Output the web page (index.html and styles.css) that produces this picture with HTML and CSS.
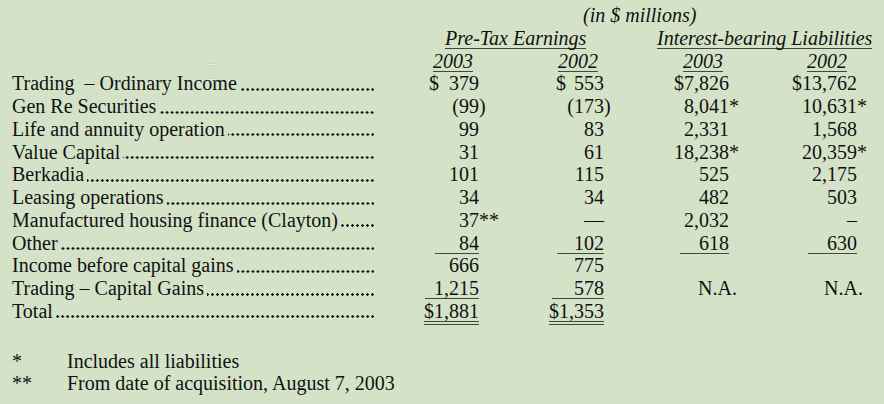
FILE: index.html
```html
<!DOCTYPE html>
<html>
<head>
<meta charset="utf-8">
<link rel="stylesheet" href="styles.css">
</head>
<body>
<div class="sheet">
  <div class="row">
    <div class="cap">(in $ millions)</div>
  </div>
  <div class="row">
    <div class="lab"></div>
    <div class="grp grp1"><span class="u">Pre-Tax Earnings</span></div>
    <div class="grp grp2"><span class="u">Interest-bearing Liabilities</span></div>
  </div>
  <div class="row">
    <div class="lab"></div>
    <div class="num yr"><span class="u">2003</span></div>
    <div class="num yr"><span class="u">2002</span></div>
    <div class="num yr"><span class="u">2003</span></div>
    <div class="num yr yr4"><span class="u">2002</span></div>
  </div>

  <div class="row">
    <div class="lab"><span class="txt">Trading&nbsp; – Ordinary Income</span><span class="dots"></span></div>
    <div class="num"><span class="cur">$</span>379</div>
    <div class="num"><span class="cur c2">$</span>553</div>
    <div class="num">$7,826</div>
    <div class="num">$13,762</div>
  </div>
  <div class="row">
    <div class="lab"><span class="txt">Gen Re Securities</span><span class="dots"></span></div>
    <div class="num">(99<span class="hp">)</span></div>
    <div class="num">(173<span class="hp">)</span></div>
    <div class="num">8,041<span class="hs">*</span></div>
    <div class="num">10,631<span class="hs">*</span></div>
  </div>
  <div class="row">
    <div class="lab"><span class="txt">Life and annuity operation</span><span class="dots"></span></div>
    <div class="num">99</div>
    <div class="num">83</div>
    <div class="num">2,331</div>
    <div class="num">1,568</div>
  </div>
  <div class="row">
    <div class="lab"><span class="txt">Value Capital</span><span class="dots"></span></div>
    <div class="num">31</div>
    <div class="num">61</div>
    <div class="num">18,238<span class="hs">*</span></div>
    <div class="num">20,359<span class="hs">*</span></div>
  </div>
  <div class="row">
    <div class="lab"><span class="txt">Berkadia</span><span class="dots"></span></div>
    <div class="num">101</div>
    <div class="num">115</div>
    <div class="num">525</div>
    <div class="num">2,175</div>
  </div>
  <div class="row">
    <div class="lab"><span class="txt">Leasing operations</span><span class="dots"></span></div>
    <div class="num">34</div>
    <div class="num">34</div>
    <div class="num">482</div>
    <div class="num">503</div>
  </div>
  <div class="row">
    <div class="lab"><span class="txt">Manufactured housing finance (Clayton)</span><span class="dots"></span></div>
    <div class="num">37<span class="hss">**</span></div>
    <div class="num">—</div>
    <div class="num">2,032</div>
    <div class="num">–</div>
  </div>
  <div class="row">
    <div class="lab"><span class="txt">Other</span><span class="dots"></span></div>
    <div class="num"><span class="u w44">84</span></div>
    <div class="num"><span class="u w47">102</span></div>
    <div class="num"><span class="u w49">618</span></div>
    <div class="num"><span class="u w49">630</span></div>
  </div>
  <div class="row">
    <div class="lab"><span class="txt">Income before capital gains</span><span class="dots"></span></div>
    <div class="num">666</div>
    <div class="num">775</div>
    <div class="num"></div>
    <div class="num"></div>
  </div>
  <div class="row">
    <div class="lab"><span class="txt">Trading – Capital Gains</span><span class="dots"></span></div>
    <div class="num"><span class="u w54">1,215</span></div>
    <div class="num"><span class="u w52">578</span></div>
    <div class="num"><span class="na">N.A.</span></div>
    <div class="num"><span class="na na4">N.A.</span></div>
  </div>
  <div class="row">
    <div class="lab"><span class="txt">Total</span><span class="dots"></span></div>
    <div class="num"><span class="u uu w54">$1,881</span></div>
    <div class="num"><span class="u uu w52">$1,353</span></div>
    <div class="num"></div>
    <div class="num"></div>
  </div>

  <div class="notes">
    <div class="mark">*</div><div>Includes all liabilities</div>
    <div class="mark">**</div><div>From date of acquisition, August 7, 2003</div>
  </div>

  <svg class="ibeam" width="10" height="18" viewBox="0 0 10 18" aria-hidden="true">
    <path d="M2 1.5h2.5M5.5 1.5h2.5M5 2v14M2 16.5h2.5M5.5 16.5h2.5" stroke="#b9c4b2" stroke-width="2.2" fill="none"/>
    <path d="M2 1.5h2.5M5.5 1.5h2.5M5 2v14M2 16.5h2.5M5.5 16.5h2.5" stroke="#f4f7f1" stroke-width="1" fill="none"/>
  </svg>
</div>
</body>
</html>
```

FILE: styles.css
```css
html, body {
  margin: 0;
  padding: 0;
  background: #d4e3c8;
}

body {
  width: 884px;
  height: 404px;
  overflow: hidden;
  font-family: "Liberation Serif", "Times New Roman", serif;
  font-size: 20px;
  line-height: 22.75px;
  color: #111;
}

.sheet {
  position: relative;
  padding: 4px 0 0 12px;
}

.row {
  display: grid;
  grid-template-columns: 362px 105px 125px 125px 128px;
  height: 22.75px;
}

.cap {
  grid-column: 2 / 6;
  padding-left: 209px;
  font-style: italic;
  white-space: nowrap;
}

.grp {
  font-style: italic;
  white-space: nowrap;
}

.grp1 {
  grid-column: 2 / 4;
  padding-left: 71px;
}

.grp2 {
  grid-column: 4 / 6;
  padding-left: 53px;
}

.lab {
  display: flex;
  white-space: nowrap;
  min-width: 0;
}

.txt {
  flex: none;
}

.dots {
  flex: 1 1 0;
  min-width: 0;
  margin-left: 3px;
  background-image: radial-gradient(circle at 2.5px 1.5px, #151515 0, #151515 1px, rgba(21, 21, 21, 0) 1.5px);
  background-size: 5px 3px;
  background-repeat: repeat-x;
  background-position: right -1px top 15.5px;
}

.num {
  text-align: right;
  white-space: nowrap;
}

.yr {
  font-style: italic;
  padding-right: 6px;
}

.yr4 {
  padding-right: 10px;
}

.u {
  display: inline-block;
  line-height: 19px;
  border-bottom: 1px solid #3f4a3c;
  text-align: right;
}

.uu {
  position: relative;
}

.uu::after {
  content: "";
  position: absolute;
  left: 0;
  right: 0;
  bottom: -4px;
  height: 1px;
  background: #3f4a3c;
}

.w44 { min-width: 44px; }
.w47 { min-width: 47px; }
.w49 { min-width: 49px; }
.w52 { min-width: 52px; }
.w54 { min-width: 54px; }

.cur {
  display: inline-block;
  width: 20px;
  text-align: left;
}

.cur.c2 {
  width: 18px;
}

.hp { margin-right: -0.333em; }
.hs { margin-right: -0.5em; }
.hss { margin-right: -1em; }

.na { margin-right: -8px; }
.na4 { margin-right: -6px; }

.notes {
  display: grid;
  grid-template-columns: 55px auto;
  margin-top: 27px;
}

.ibeam {
  position: absolute;
  left: 208px;
  top: 63px;
}
```
